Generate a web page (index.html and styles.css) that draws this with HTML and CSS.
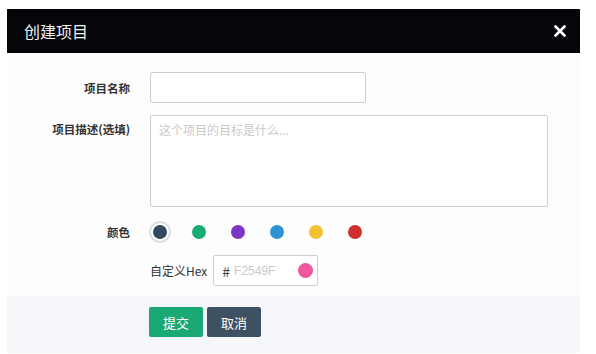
FILE: index.html
```html
<!DOCTYPE html>
<html>
    <head>
        <meta name="viewport" content="width=device-width, initial-scale=1.0">
        <meta charset="utf-8">
        <title>创建项目</title>
        <link rel="stylesheet" href="styles.css">
    </head>
    <body>
        <div class="modal">
            <div class="modal-head">
                <div class="modal-title">创建项目</div>
                <svg class="close" width="12" height="12" viewBox="0 0 12 12">
                    <path d="M1.5 1.5L10.5 10.5M10.5 1.5L1.5 10.5" stroke="#fff" stroke-width="2.6" stroke-linecap="round"/>
                </svg>
            </div>
            <div class="modal-body">
                <div class="row">
                    <label class="label">项目名称</label>
                    <div class="field"><div class="input name"></div></div>
                </div>
                <div class="row">
                    <label class="label top">项目描述(选填)</label>
                    <div class="field"><div class="input area">这个项目的目标是什么...</div></div>
                </div>
                <div class="row colors-row">
                    <label class="label">颜色</label>
                    <div class="field colors">
                        <span class="swatch selected"><i style="background:#34495e"></i></span>
                        <span class="swatch"><i style="background:#1aab74"></i></span>
                        <span class="swatch"><i style="background:#7b35c2"></i></span>
                        <span class="swatch"><i style="background:#2b93d1"></i></span>
                        <span class="swatch"><i style="background:#f2c232"></i></span>
                        <span class="swatch"><i style="background:#d0302e"></i></span>
                    </div>
                </div>
                <div class="row">
                    <div></div>
                    <div class="field hex">
                        <span class="hex-label">自定义Hex</span>
                        <div class="hex-input">
                            <span class="hash">#</span>
                            <span class="hex-ph">F2549F</span>
                            <i class="hex-dot"></i>
                        </div>
                    </div>
                </div>
            </div>
            <div class="modal-foot">
                <button class="btn ok">提交</button>
                <button class="btn cancel">取消</button>
            </div>
        </div>
    </body>
</html>
```

FILE: styles.css
```css
html, body{
    margin:0;
    background:#fff;
}
body{
    font-family:"Noto Sans CJK SC","Noto Sans",sans-serif;
    color:#333;
    font-size:12px;
}
.modal{
    margin:9px 16px 0 7px;
    background:#fdfdfd;
}
.modal-head{
    height:44px;
    background:#05060a;
    display:flex;
    align-items:center;
    justify-content:space-between;
    padding:0 14px 0 17px;
}
.modal-title{
    color:#f2f2f2;
    font-size:16px;
    line-height:44px;
}
.close{
    display:block;
}
.modal-body{
    padding:19px 0 10px;
    display:flex;
    flex-direction:column;
    gap:12px;
}
.row{
    display:grid;
    grid-template-columns:123px 1fr;
    column-gap:20px;
    align-items:center;
}
.label{
    text-align:right;
    font-weight:bold;
    font-size:11.5px;
    color:#333;
}
.label.top{
    align-self:start;
    padding-top:6px;
}
.input{
    box-sizing:border-box;
    border:1px solid #cfcfcf;
    border-radius:2px;
    background:#fff;
}
.input.name{
    width:216px;
    height:31px;
}
.input.area{
    width:398px;
    height:92px;
    padding:5px 8px;
    color:#c9c9c9;
    font-size:12px;
}
.colors-row{
    margin-top:2px;
}
.colors{
    display:flex;
    gap:17px;
    margin-left:-1px;
}
.swatch{
    width:22px;
    height:22px;
    display:flex;
    align-items:center;
    justify-content:center;
}
.swatch i{
    width:14px;
    height:14px;
    border-radius:50%;
}
.swatch.selected i{
    box-shadow:0 0 0 2px #fff, 0 0 0 4px #dcdfe4;
}
.hex{
    display:flex;
    align-items:center;
    gap:6px;
}
.hex-label{
    color:#333;
}
.hex-input{
    box-sizing:border-box;
    width:105px;
    height:31px;
    border:1px solid #cfcfcf;
    border-radius:2px;
    background:#fff;
    display:flex;
    align-items:center;
    padding:0 4px 0 8px;
}
.hash{
    font-size:14px;
    color:#444;
    margin-right:4px;
}
.hex-ph{
    color:#c9c9c9;
    font-size:12px;
    font-family:"Liberation Sans",sans-serif;
    flex:1;
}
.hex-dot{
    width:15px;
    height:15px;
    border-radius:50%;
    background:#ef579d;
}
.modal-foot{
    background:#f5f6f9;
    height:57px;
    box-sizing:border-box;
    padding:11px 0 0 142px;
    display:flex;
    gap:4px;
    align-items:flex-start;
}
.btn{
    border:none;
    border-radius:2px;
    height:30px;
    width:54px;
    color:#fff;
    font-family:"Noto Sans CJK SC",sans-serif;
    font-size:13px;
    padding:0;
}
.btn.ok{
    background:#1aa874;
}
.btn.cancel{
    background:#3d5163;
}
```
